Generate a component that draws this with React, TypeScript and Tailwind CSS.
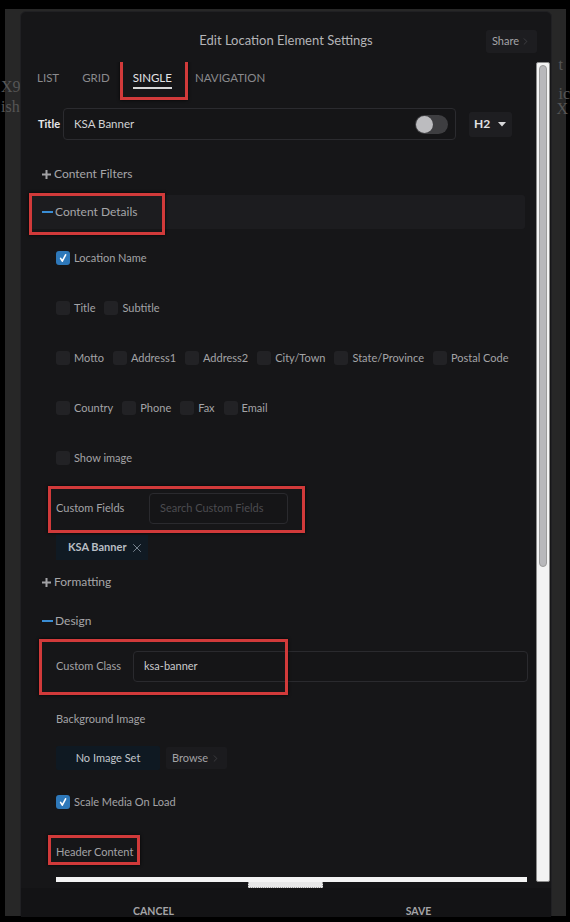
import React from "react";
import { ChevronRight, X } from "lucide-react";

const RedBox = ({ cls }: { cls: string }) => (
  <span
    className={`pointer-events-none absolute border-[3px] border-[#d13a3a] shadow-[0_0_3px_rgba(0,0,0,0.9)] ${cls}`}
  />
);

const Check = ({ checked = false }: { checked?: boolean }) =>
  checked ? (
    <span className="flex h-[14px] w-[14px] shrink-0 items-center justify-center rounded-[3px] bg-[#2e78b9]">
      <svg width="10" height="10" viewBox="0 0 10 10">
        <path d="M2.6 5.4 L4.3 8.2 L7.6 1.8" fill="none" stroke="#fff" strokeWidth="1.6" strokeLinecap="round" strokeLinejoin="round" />
      </svg>
    </span>
  ) : (
    <span className="h-[14px] w-[14px] shrink-0 rounded-[3px] bg-[#222225]" />
  );

const Item = ({ label, checked }: { label: string; checked?: boolean }) => (
  <div className="flex items-center gap-[4px]">
    <Check checked={checked} />
    <span className="text-[11px] leading-[14px] text-[#a3a3a6]">{label}</span>
  </div>
);

const CheckRow = ({ items }: { items: { l: string; c?: boolean }[] }) => (
  <div className="flex h-[50px] items-center gap-[9px] pl-[35px]">
    {items.map((i) => (
      <Item key={i.l} label={i.l} checked={i.c} />
    ))}
  </div>
);

const Plus = () => (
  <svg width="11" height="11" viewBox="0 0 11 11" className="mr-[2px]">
    <path d="M5.5 1 V10 M1 5.5 H10" stroke="#a2a2a5" strokeWidth="2" />
  </svg>
);
const Minus = () => <span className="mr-[2px] inline-block h-[2.5px] w-[11px] bg-[#3a8dd4]" />;

export default function App() {
  return (
    <div className="h-[922px] w-[570px] overflow-hidden bg-black pb-[6px] pl-[5px] pr-[4px] pt-[9px] font-[family-name:Lato,sans-serif]">
      <div className="relative flex h-[907px] bg-[#272727] pl-[15px] pt-[2px]">
        <span className="absolute left-[-4px] top-[70px] font-[family-name:'Liberation_Serif',serif] text-[16px] leading-[16px] text-[#555]">X9</span>
        <span className="absolute left-[-4px] top-[90px] font-[family-name:'Liberation_Serif',serif] text-[16px] leading-[16px] text-[#555]">ish</span>
        <span className="absolute right-[3px] top-[48px] font-[family-name:'Liberation_Serif',serif] text-[16px] leading-[16px] text-[#555]">t</span>
        <span className="absolute right-[-4px] top-[77px] font-[family-name:'Liberation_Serif',serif] text-[16px] leading-[16px] text-[#555]">ic</span>
        <span className="absolute right-[-2px] top-[92px] font-[family-name:'Liberation_Serif',serif] text-[16px] leading-[16px] text-[#555]">X</span>

        <div className="relative z-10 flex h-[905px] w-[532px] flex-col rounded-t-[6px] border border-[#202023] bg-[#161618]">
          {/* header */}
          <div className="grid h-[50px] shrink-0 grid-cols-[1fr_auto_1fr] items-center pt-[8px]">
            <div />
            <div className="text-[13px] text-[#b4b4b7]">Edit Location Element Settings</div>
            <div className="flex justify-end pr-[14px]">
              <div className="flex h-[23px] w-[51px] items-center justify-center gap-[1px] rounded-[3px] bg-[#1d1d20] text-[11px] text-[#a4a4a7]">
                Share
                <ChevronRight size={11} strokeWidth={1.5} className="text-[#4a4a4e]" />
              </div>
            </div>
          </div>

          {/* body */}
          <div className="flex h-[826px] shrink-0">
            <div className="flex-1 overflow-hidden">
              {/* tabs */}
              <div className="relative flex h-[38px] items-start gap-[23px] pl-[16px] pt-[8px] text-[11.5px] leading-[16px]">
                <span className="text-[#8a8a8d]">LIST</span>
                <span className="text-[#8a8a8d]">GRID</span>
                <span className="relative border-b-[2px] border-[#d8d8d8] pb-[1px] text-[#e4e4e6]">
                  SINGLE
                  <RedBox cls="left-[-13px] top-[-12px] h-[42px] w-[68px]" />
                </span>
                <span className="text-[#8a8a8d]">NAVIGATION</span>
              </div>

              {/* title row */}
              <div className="mt-[8px] flex h-[32px] items-center pl-[17px]">
                <span className="w-[25px] text-[11px] font-bold text-[#e8e8ea]">Title</span>
                <div className="flex h-[32px] w-[393px] items-center justify-between rounded-[4px] border border-[#2b2b2f] bg-[#151517] pl-[10px] pr-[7px]">
                  <span className="text-[11.5px] text-[#d2d2d4]">KSA Banner</span>
                  <span className="flex h-[19px] w-[33px] items-center rounded-full bg-[#3e3e41] pl-[1px]">
                    <span className="h-[17px] w-[17px] rounded-full bg-[#bcbcbf]" />
                  </span>
                </div>
                <div className="ml-[13px] flex h-[25px] w-[43px] items-center justify-between rounded-[3px] bg-[#1e1e21] pl-[5px] pr-[6px]">
                  <span className="text-[12px] font-bold text-[#e2e2e4]">H2</span>
                  <svg width="8" height="5" viewBox="0 0 8 5">
                    <path d="M0 0 H8 L4 4.5 Z" fill="#d8d8da" />
                  </svg>
                </div>
              </div>

              {/* content filters */}
              <div className="mt-[17px] flex h-[34px] items-center pl-[20px] text-[12px] text-[#a6a6a9]">
                <Plus />
                Content Filters
              </div>

              {/* content details */}
              <div className="relative ml-[8px] mr-[11px] mt-[4px] flex h-[34px] items-center rounded-[3px] bg-[#1c1c1f] pl-[13px] text-[12px] text-[#a6a6a9]">
                <Minus />
                Content Details
                <RedBox cls="left-0 top-[-2px] h-[42px] w-[136px]" />
              </div>

              <div className="mt-[4px]">
                <CheckRow items={[{ l: "Location Name", c: true }]} />
                <CheckRow items={[{ l: "Title" }, { l: "Subtitle" }]} />
                <CheckRow
                  items={[
                    { l: "Motto" },
                    { l: "Address1" },
                    { l: "Address2" },
                    { l: "City/Town" },
                    { l: "State/Province" },
                    { l: "Postal Code" },
                  ]}
                />
                <CheckRow items={[{ l: "Country" }, { l: "Phone" }, { l: "Fax" }, { l: "Email" }]} />
                <CheckRow items={[{ l: "Show image" }]} />
              </div>

              {/* custom fields */}
              <div className="relative flex h-[50px] items-center pl-[35px]">
                <span className="w-[93px] text-[11px] text-[#a3a3a6]">Custom Fields</span>
                <div className="flex h-[31px] w-[139px] items-center rounded-[4px] border border-[#2a2a2e] bg-[#151517] pl-[10px] text-[11px] text-[#4c4c50]">
                  Search Custom Fields
                </div>
                <RedBox cls="left-[27px] top-[3px] h-[47px] w-[257px]" />
              </div>

              <div className="ml-[35px] mt-[2px] flex h-[25px] w-[92px] items-center justify-between bg-[#101a23] pl-[12px] pr-[4px]">
                <span className="text-[11px] font-bold text-[#b9bec4]">KSA Banner</span>
                <X size={14} strokeWidth={1.6} className="text-[#7e8a96]" />
              </div>

              <div className="mt-[5px] flex h-[34px] items-center pl-[20px] text-[12px] text-[#a6a6a9]">
                <Plus />
                Formatting
              </div>
              <div className="mt-[5px] flex h-[34px] items-center pl-[21px] text-[12px] text-[#a6a6a9]">
                <Minus />
                Design
              </div>

              {/* custom class */}
              <div className="relative mt-[13px] flex h-[31px] items-center pl-[35px]">
                <span className="w-[77px] text-[11px] text-[#a3a3a6]">Custom Class</span>
                <div className="flex h-[31px] w-[395px] items-center rounded-[4px] border border-[#2a2a2e] bg-[#151517] pl-[10px] text-[11px] text-[#cacacc]">
                  ksa-banner
                </div>
                <RedBox cls="left-[18px] top-[-12px] h-[56px] w-[249px]" />
              </div>

              <div className="mt-[27px] flex h-[20px] items-center pl-[35px] text-[11px] text-[#a3a3a6]">Background Image</div>

              <div className="mt-[17px] flex h-[24px] items-center pl-[35px]">
                <div className="flex h-[24px] w-[104px] items-center justify-center rounded-[2px] bg-[#0f1922] text-[11px] text-[#c2c7cc]">
                  No Image Set
                </div>
                <div className="ml-[6px] flex h-[22px] w-[61px] items-center justify-center gap-[2px] rounded-[2px] bg-[#1b1b1e] text-[11px] text-[#a2a2a5]">
                  Browse
                  <ChevronRight size={11} strokeWidth={1.5} className="text-[#48484c]" />
                </div>
              </div>

              <div className="mt-[22px] flex h-[20px] items-center pl-[35px]">
                <Item label="Scale Media On Load" checked />
              </div>

              <div className="relative mt-[30px] flex h-[20px] items-center pl-[35px] text-[11px] text-[#a3a3a6]">
                Header Content
                <RedBox cls="left-[27px] top-[-7px] h-[30px] w-[92px]" />
              </div>

              <div className="ml-[35px] mt-[15px] h-[5px] w-[471px] bg-[#f4f4f4]" />
              <div className="ml-[227px] h-[6px] w-[75px] border border-t-0 border-dotted border-[#9a9a9a] bg-[#e8e8e8]" />
            </div>

            {/* scrollbar */}
            <div className="mb-[6px] mr-[1px] w-[14px] rounded-[2px] border border-[#8c8c8c] bg-[#f3f3f3] px-[2px] pt-[2px]">
              <div className="h-[502px] rounded-full border border-[#9a9a9a] bg-[#b8b8bb]" />
            </div>
          </div>

          {/* footer */}
          <div className="grid flex-1 grid-cols-2 bg-[#131315] pt-[17px] text-[10.5px] font-bold leading-[12px] text-[#a4a4a7]">
            <div className="text-center">CANCEL</div>
            <div className="text-center">SAVE</div>
          </div>
        </div>
      </div>
    </div>
  );
}
